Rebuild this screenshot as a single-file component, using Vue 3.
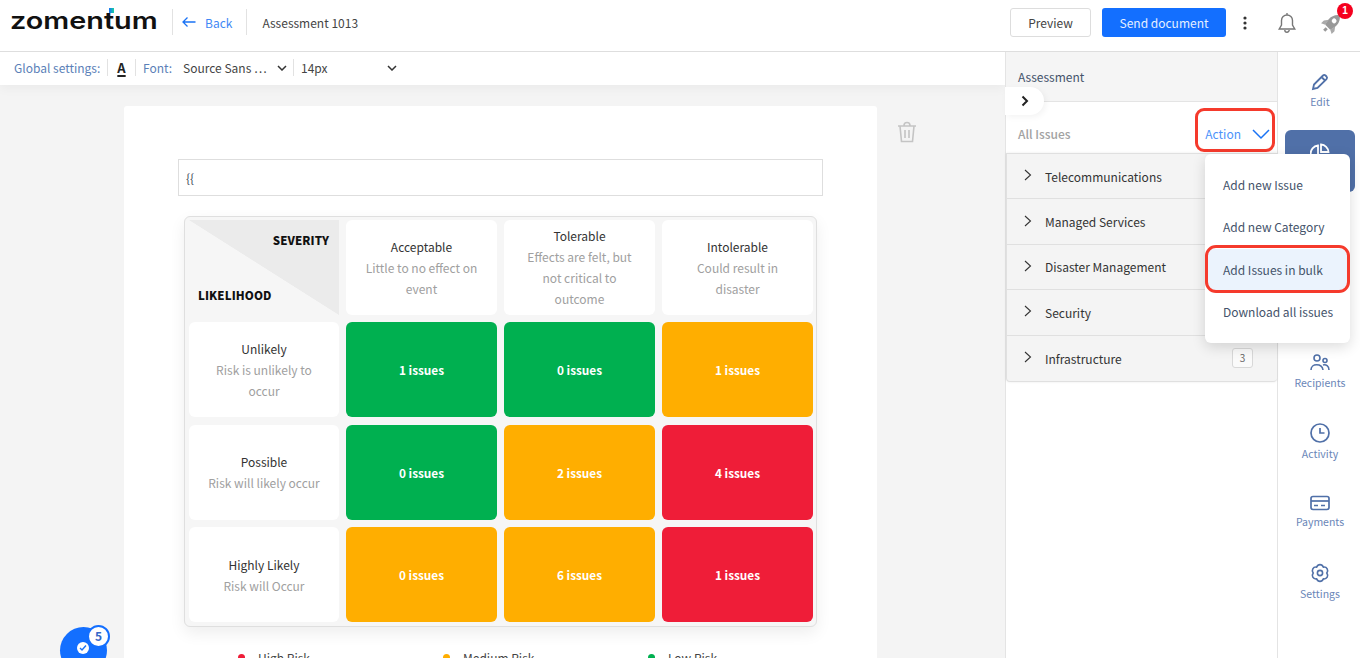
<script setup>
const columns = [
  { title: 'Acceptable', text: 'Little to no effect on event' },
  { title: 'Tolerable', text: 'Effects are felt, but not critical to outcome' },
  { title: 'Intolerable', text: 'Could result in disaster' }
]
const rows = [
  { title: 'Unlikely', text: 'Risk is unlikely to occur', cells: [['1 issues', 'green'], ['0 issues', 'green'], ['1 issues', 'amber']] },
  { title: 'Possible', text: 'Risk will likely occur', cells: [['0 issues', 'green'], ['2 issues', 'amber'], ['4 issues', 'red']] },
  { title: 'Highly Likely', text: 'Risk will Occur', cells: [['0 issues', 'amber'], ['6 issues', 'amber'], ['1 issues', 'red']] }
]
const categories = ['Telecommunications', 'Managed Services', 'Disaster Management', 'Security', 'Infrastructure']
const menu = ['Add new Issue', 'Add new Category', 'Add Issues in bulk', 'Download all issues']
const legend = [['High Risk', 'red'], ['Medium Risk', 'amber'], ['Low Risk', 'green']]
</script>

<template>
  <div class="app">
    <header class="top">
      <div class="logo"><span class="logo-word">zomentum</span><i class="logo-tick"></i></div>
      <span class="top-sep first"></span>
      <a class="back">
        <svg width="14" height="12" viewBox="0 0 14 12" fill="none" stroke="#1a73f5" stroke-width="1.3"><path d="M13.5 6H1M5.5 1.5 1 6l4.5 4.5" /></svg>
        Back
      </a>
      <span class="top-sep second"></span>
      <span class="doc-name">Assessment 1013</span>
      <div class="top-right">
        <button class="btn ghost">Preview</button>
        <button class="btn primary">Send document</button>
        <svg class="kebab" width="4" height="14" viewBox="0 0 4 14" fill="#333"><circle cx="2" cy="2" r="1.6" /><circle cx="2" cy="7" r="1.6" /><circle cx="2" cy="12" r="1.6" /></svg>
        <svg class="bell" width="18" height="21" viewBox="0 0 18 21" fill="none" stroke="#777" stroke-width="1.4"><path d="M9 3a5.500 5.500 0 0 0-5.500 5.500V13L1.200 17h15.600l-2.300-4V8.500A5.500 5.500 0 0 0 9 3ZM9 3V1M6.800 18a2.200 2.200 0 0 0 4.400 0" /></svg>
        <div class="rocket">
          <svg width="22" height="22" viewBox="0 0 22 22">
            <g transform="rotate(45 11 11)">
              <path d="M11 0c4 3 5 7 5 10 0 3-1 6-1.500 7h-7C7 16 6 13 6 10c0-3 1-7 5-10Z" fill="#999" />
              <circle cx="11" cy="8" r="2.400" fill="#fff" />
              <path d="M6.500 11 3.500 15v4l4-2ZM15.500 11l3 4v4l-4-2Z" fill="#aaa" />
              <path d="M9.500 18.500h3V22h-3Z" fill="#999" />
            </g>
          </svg>
          <span class="rocket-badge">1</span>
        </div>
      </div>
    </header>

    <div class="body">
      <main class="main">
        <div class="toolbar">
          <span class="tb-label global">Global settings:</span>
          <span class="tb-sep"></span>
          <span class="tb-a">A</span>
          <span class="tb-sep"></span>
          <span class="tb-label font">Font:</span>
          <span class="tb-value font-val">Source Sans …</span>
          <svg class="tb-chev" width="10" height="6" viewBox="0 0 10 6" fill="none" stroke="#333" stroke-width="1.500"><path d="M1 1l4 4 4-4" /></svg>
          <span class="tb-sep"></span>
          <span class="tb-value size-val">14px</span>
          <svg class="tb-chev" width="10" height="6" viewBox="0 0 10 6" fill="none" stroke="#333" stroke-width="1.500"><path d="M1 1l4 4 4-4" /></svg>
        </div>
        <div class="canvas">
          <section class="page">
            <div class="field">{{ '{{' }}</div>
            <div class="matrix">
              <div class="corner">
                <b class="sev">SEVERITY</b>
                <b class="lik">LIKELIHOOD</b>
              </div>
              <div v-for="c in columns" :key="c.title" class="head-cell">
                <div class="cell-title">{{ c.title }}</div>
                <div class="cell-text">{{ c.text }}</div>
              </div>
              <template v-for="r in rows" :key="r.title">
                <div class="head-cell">
                  <div class="cell-title">{{ r.title }}</div>
                  <div class="cell-text">{{ r.text }}</div>
                </div>
                <div v-for="(cell, i) in r.cells" :key="i" class="risk" :class="cell[1]">{{ cell[0] }}</div>
              </template>
            </div>
            <div class="legend">
              <div v-for="l in legend" :key="l[0]" class="legend-item">
                <i class="dot" :class="l[1]"></i>{{ l[0] }}
              </div>
            </div>
          </section>
          <svg class="trash" width="20" height="22" viewBox="0 0 20 22" fill="none" stroke="#c4c4c4" stroke-width="1.600"><path d="M1 5h18M7 4.500c0-4 6-4 6 0M3 5l1.500 15.500h11L17 5M8 9v8M12 9v8" /></svg>
        </div>
        <div class="fab">
          <span class="fab-check">
            <svg width="8" height="8" viewBox="0 0 8 8" fill="none" stroke="#1a73f5" stroke-width="1.400"><path d="M1 4l2 2 4-4.500" /></svg>
          </span>
          <span class="fab-badge">5</span>
        </div>
      </main>

      <aside class="panel">
        <div class="panel-head">Assessment</div>
        <button class="collapse">
          <svg width="8" height="12" viewBox="0 0 8 12" fill="none" stroke="#222" stroke-width="2"><path d="M1.500 1.500 6 6l-4.500 4.500" /></svg>
        </button>
        <div class="issues-row">
          <span class="all-issues">All Issues</span>
          <div class="action">
            <span>Action</span>
            <svg width="18" height="11" viewBox="0 0 18 11" fill="none" stroke="#1a73f5" stroke-width="1.500"><path d="M1 1l8 8 8-8" /></svg>
          </div>
        </div>
        <div class="accordion">
          <div v-for="c in categories" :key="c" class="acc-row">
            <svg width="8" height="12" viewBox="0 0 8 12" fill="none" stroke="#333" stroke-width="1.100"><path d="M1 1l5.500 5L1 11" /></svg>
            <span class="acc-name">{{ c }}</span>
            <span v-if="c === 'Infrastructure'" class="count">3</span>
          </div>
        </div>
      </aside>

      <nav class="rail">
        <div class="rail-item">
          <svg width="18" height="18" viewBox="0 0 18 18" fill="none" stroke="#5070a8" stroke-width="1.800"><path d="M2 16l1-4.500L12 2.500a1.800 1.800 0 0 1 2.500 0l1 1a1.800 1.800 0 0 1 0 2.500L6.500 15 2 16ZM10.500 4l3.500 3.500" /></svg>
          <span>Edit</span>
        </div>
        <div class="rail-item active">
          <svg width="20" height="20" viewBox="0 0 20 20" fill="none" stroke="#fff" stroke-width="1.800"><path d="M8 2.500a8.500 8.500 0 1 0 9.500 9.500H8V2.500Z" /><path d="M11 1.500a8 8 0 0 1 7.500 7.500H11V1.500Z" /></svg>
        </div>
        <div class="rail-gap"></div>
        <div class="rail-item">
          <svg width="20" height="18" viewBox="0 0 20 18" fill="none" stroke="#5070a8" stroke-width="1.600"><circle cx="7" cy="4" r="3" /><circle cx="15" cy="6.500" r="2" /><path d="M1 16c0-7 11-7 12 0M13 11c3-1 6 1 6 5" /></svg>
          <span>Recipients</span>
        </div>
        <div class="rail-item">
          <svg width="20" height="20" viewBox="0 0 20 20" fill="none" stroke="#5070a8" stroke-width="1.700"><circle cx="10" cy="10" r="9" /><path d="M10 5v5h4.500" /></svg>
          <span>Activity</span>
        </div>
        <div class="rail-item">
          <svg width="20" height="16" viewBox="0 0 20 16" fill="none" stroke="#5070a8" stroke-width="1.700"><rect x="1" y="1.500" width="18" height="13" rx="2" /><path d="M1 6h18" /><path d="M4 10.500h4M11 10.500h4" /></svg>
          <span>Payments</span>
        </div>
        <div class="rail-item">
          <svg width="20" height="20" viewBox="0 0 20 20" fill="none" stroke="#5070a8" stroke-width="1.600"><path d="M6.600 4.100C8 .8 12 .8 13.400 4.100C16.900 3.600 18.900 7.100 16.800 10C18.900 12.900 16.900 16.400 13.400 15.900C12 19.200 8 19.200 6.600 15.900C3.100 16.400 1.100 12.900 3.200 10C1.100 7.100 3.100 3.600 6.600 4.100Z" /><circle cx="10" cy="10" r="2.600" /></svg>
          <span>Settings</span>
        </div>
      </nav>
    </div>

    <div class="action-ring"></div>
    <div class="menu">
      <div v-for="m in menu" :key="m" class="menu-item" :class="{ on: m === 'Add Issues in bulk' }">{{ m }}</div>
      <div class="bulk-ring"></div>
    </div>
  </div>
</template>

<style>
html, body { margin: 0; height: 100%; overflow: hidden; background: #fff; }
</style>

<style scoped>
.app {
  position: relative;
  width: 1360px;
  height: 658px;
  overflow: hidden;
  display: flex;
  flex-direction: column;
  font-family: "Noto Sans CJK JP", "Noto Sans", sans-serif;
  font-size: 12px;
  color: #333;
}
.top {
  height: 51px;
  flex: none;
  display: flex;
  align-items: center;
  background: #fff;
  border-bottom: 1px solid #dedede;
}
.logo {
  position: relative;
  margin-left: 10px;
  width: 150px;
  height: 30px;
  margin-top: -10px;
}
.logo-word {
  display: block;
  font-family: Inter, sans-serif;
  font-weight: 600;
  font-size: 24px;
  line-height: 30px;
  color: #111;
  transform: scaleX(1.2);
  transform-origin: left center;
}
.logo-tick {
  position: absolute;
  left: 99px;
  top: 2px;
  width: 5px;
  height: 5px;
  background: linear-gradient(90deg, #1a73f5, #14d2a0);
}
.top-sep { width: 1px; height: 26px; background: #e2e2e2; margin-top: -7px; }
.top-sep.first { margin-left: 12px; }
.top-sep.second { margin-left: 14px; }
.back {
  display: flex;
  align-items: center;
  gap: 9px;
  margin-left: 9px;
  color: #3f88f5;
  font-size: 12px;
  margin-top: -7px;
}
.doc-name { margin-left: 15px; color: #444; font-size: 12px; margin-top: -7px; }
.top-right { margin-left: auto; display: flex; align-items: center; margin-top: -6px; }
.btn {
  height: 29px;
  border-radius: 3px;
  font-family: inherit;
  font-size: 12px;
  cursor: pointer;
  box-sizing: border-box;
}
.ghost { width: 81px; background: #fff; border: 1px solid #ddd; color: #444; }
.primary { width: 124px; margin-left: 11px; background: #136fff; border: 0; color: #e6f0ff; }
.kebab { margin-left: 17px; }
.bell { margin-left: 31px; }
.rocket { position: relative; margin-left: 25px; margin-right: 17px; width: 22px; height: 22px; }
.rocket-badge {
  position: absolute;
  left: 16px;
  top: -9px;
  width: 16px;
  height: 16px;
  border-radius: 50%;
  background: #f5001e;
  color: #fff;
  font: 700 10px/16px "Liberation Sans", sans-serif;
  text-align: center;
}
.body { flex: 1; min-height: 0; display: flex; }
.main {
  position: relative;
  width: 1005px;
  flex: none;
  display: flex;
  flex-direction: column;
  background: #f4f4f4;
  overflow: hidden;
}
.toolbar {
  height: 33px;
  flex: none;
  box-sizing: border-box;
  padding: 0 0 2px 14px;
  display: flex;
  align-items: center;
  background: #fff;
  box-shadow: 0 4px 10px rgba(0, 0, 0, 0.04);
  position: relative;
  white-space: nowrap;
}
.tb-label { color: #5b7fb8; font-size: 12px; }
.tb-sep { width: 1px; height: 17px; background: #e2e2e2; }
.global { width: 93px; flex: none; }
.tb-a {
  width: 27px;
  flex: none;
  text-align: center;
  font-weight: 700;
  font-size: 13px;
  line-height: 15px;
  color: #222;
  text-decoration: underline;
  text-underline-offset: 2px;
  text-decoration-thickness: 2px;
}
.font { margin-left: 7px; width: 40px; flex: none; }
.tb-value { color: #444; font-size: 12px; flex: none; }
.font-val { width: 94px; }
.size-val { margin-left: 7px; width: 86px; }
.tb-chev { margin-right: 6px; flex: none; }
.canvas { flex: 1; min-height: 0; display: flex; align-items: flex-start; padding-left: 124px; padding-top: 21px; }
.page {
  width: 753px;
  flex: none;
  box-sizing: border-box;
  height: 600px;
  padding: 53px 54px 0;
  background: #fff;
  border-radius: 3px;
}
.field {
  height: 37px;
  box-sizing: border-box;
  border: 1px solid #dedede;
  padding-left: 7px;
  line-height: 36px;
  color: #3c4654;
  font-size: 12px;
}
.matrix {
  box-sizing: border-box;
  width: 633px;
  height: 411px;
  margin: 20px 0 0 6px;
  padding: 3px 4px;
  display: grid;
  grid-template-columns: 150px repeat(3, 151px);
  grid-template-rows: 94.500px repeat(3, 95px);
  column-gap: 7px;
  row-gap: 7.500px;
  background: #f6f6f6;
  border: 1px solid #dfdfdf;
  border-radius: 6px;
  box-shadow: 0 6px 16px rgba(0, 0, 0, 0.07);
}
.corner {
  position: relative;
  background: linear-gradient(to top right, #f6f6f6 49.800%, #ebebeb 50.200%);
}
.sev, .lik {
  position: absolute;
  color: #111;
  font-size: 11.500px;
  font-weight: 900;
  letter-spacing: 0.1px;
}
.sev { right: 10px; top: 12px; }
.lik { left: 9px; bottom: 11.500px; }
.head-cell {
  background: #fff;
  border-radius: 6px;
  display: flex;
  flex-direction: column;
  justify-content: center;
  align-items: center;
  text-align: center;
  padding: 0 14px;
  line-height: 21px;
}
.cell-title { color: #333; font-size: 12px; }
.cell-text { color: #a0a0a0; font-size: 12px; }
.risk {
  display: flex;
  align-items: center;
  justify-content: center;
  border-radius: 6px;
  color: #fff;
  font-size: 11.800px;
  font-weight: 700;
}
.green { background: #00b050; }
.amber { background: #ffae00; }
.red { background: #ef1d38; }
.legend { display: flex; margin: 22px 0 0 60px; }
.legend-item { width: 205px; flex: none; display: flex; align-items: center; color: #444; font-size: 12px; }
.dot { width: 7px; height: 7px; border-radius: 50%; margin-right: 13px; }
.trash { margin: 15px 0 0 20px; }
.fab {
  position: absolute;
  left: 60px;
  top: 575px;
  width: 47px;
  height: 47px;
  border-radius: 50%;
  background: #136fff;
}
.fab-check {
  position: absolute;
  left: 17px;
  top: 15px;
  width: 12px;
  height: 12px;
  border-radius: 50%;
  background: #fff;
  display: flex;
  align-items: center;
  justify-content: center;
}
.fab-badge {
  position: absolute;
  left: 27px;
  top: -2px;
  width: 19px;
  height: 19px;
  border: 2px solid #136fff;
  border-radius: 50%;
  background: #fff;
  color: #3467c8;
  font-size: 12px;
  font-weight: 700;
  line-height: 18px;
  text-align: center;
}
.panel {
  position: relative;
  width: 273px;
  flex: none;
  box-sizing: border-box;
  border-left: 1px solid #e4e4e4;
  border-right: 1px solid #e4e4e4;
  background: #fff;
}
.panel-head {
  height: 50px;
  box-sizing: border-box;
  padding: 16px 12px 0;
  background: #f5f5f5;
  border-bottom: 1px solid #e4e4e4;
  color: #44536a;
  font-size: 12px;
}
.collapse {
  position: absolute;
  left: -1px;
  top: 35px;
  width: 39px;
  height: 28px;
  border: 0;
  border-radius: 0 14px 14px 0;
  background: #fff;
  box-shadow: 2px 2px 6px rgba(0, 0, 0, 0.05);
  display: flex;
  align-items: center;
  justify-content: center;
  padding: 0;
}
.issues-row {
  height: 51px;
  display: flex;
  align-items: center;
  justify-content: space-between;
  padding: 11px 7px 0 12px;
  box-sizing: border-box;
}
.all-issues { color: #a2a2a2; font-size: 12px; font-weight: 500; }
.action { display: flex; align-items: center; gap: 11px; color: #4c93fa; font-size: 12px; }
.action svg { margin-top: 2px; }
.accordion {
  background: #f4f4f4;
  border: 1px solid #e0e0e0;
  border-right: 0;
  border-radius: 0 0 4px 4px;
  box-shadow: 0 0 3px rgba(0, 0, 0, 0.08);
}
.acc-row {
  height: 45.400px;
  box-sizing: border-box;
  display: flex;
  align-items: center;
  padding: 0 24px 0 17px;
  border-bottom: 1px solid #e0e0e0;
}
.acc-row:last-child { border-bottom: 0; }
.acc-row svg { margin-top: -2px; }
.acc-name { margin-left: 13px; color: #333; font-size: 12px; }
.count {
  margin-left: auto;
  width: 21px;
  height: 20px;
  box-sizing: border-box;
  border: 1px solid #d8d8d8;
  border-radius: 3px;
  background: #fafafa;
  color: #666;
  font-size: 10px;
  line-height: 18px;
  text-align: center;
}
.rail { flex: 1; background: #fff; padding: 4px 0 0 2px; display: flex; flex-direction: column; align-items: center; }
.rail-item {
  width: 70px;
  height: 70px;
  flex: none;
  display: flex;
  flex-direction: column;
  align-items: center;
  justify-content: center;
  gap: 4px;
  color: #6a86b8;
  font-size: 10.500px;
  line-height: 14px;
}
.rail-item.active {
  height: 62px;
  margin: 4px 0 0;
  border-radius: 6px;
  background: #5070a8;
  justify-content: flex-start;
  padding-top: 13px;
  box-sizing: border-box;
}
.rail-gap { height: 145px; flex: none; }
.action-ring {
  position: absolute;
  left: 1195px;
  top: 108px;
  width: 80px;
  height: 44px;
  box-sizing: border-box;
  border: 3.500px solid #f53a2c;
  border-radius: 9px;
}
.menu {
  position: absolute;
  left: 1205px;
  top: 154px;
  width: 145px;
  height: 189px;
  box-sizing: border-box;
  padding-top: 10px;
  background: #fff;
  border-radius: 6px;
  box-shadow: 0 4px 14px rgba(0, 0, 0, 0.14);
}
.menu-item {
  height: 42.300px;
  box-sizing: border-box;
  padding-left: 18px;
  line-height: 42px;
  color: #44536a;
  font-size: 12px;
}
.menu-item.on { background: #ebf3fd; border-radius: 9px; }
.bulk-ring {
  position: absolute;
  left: 0;
  top: 91px;
  width: 145px;
  height: 48px;
  box-sizing: border-box;
  border: 3.500px solid #f53a2c;
  border-radius: 11px;
}
</style>
